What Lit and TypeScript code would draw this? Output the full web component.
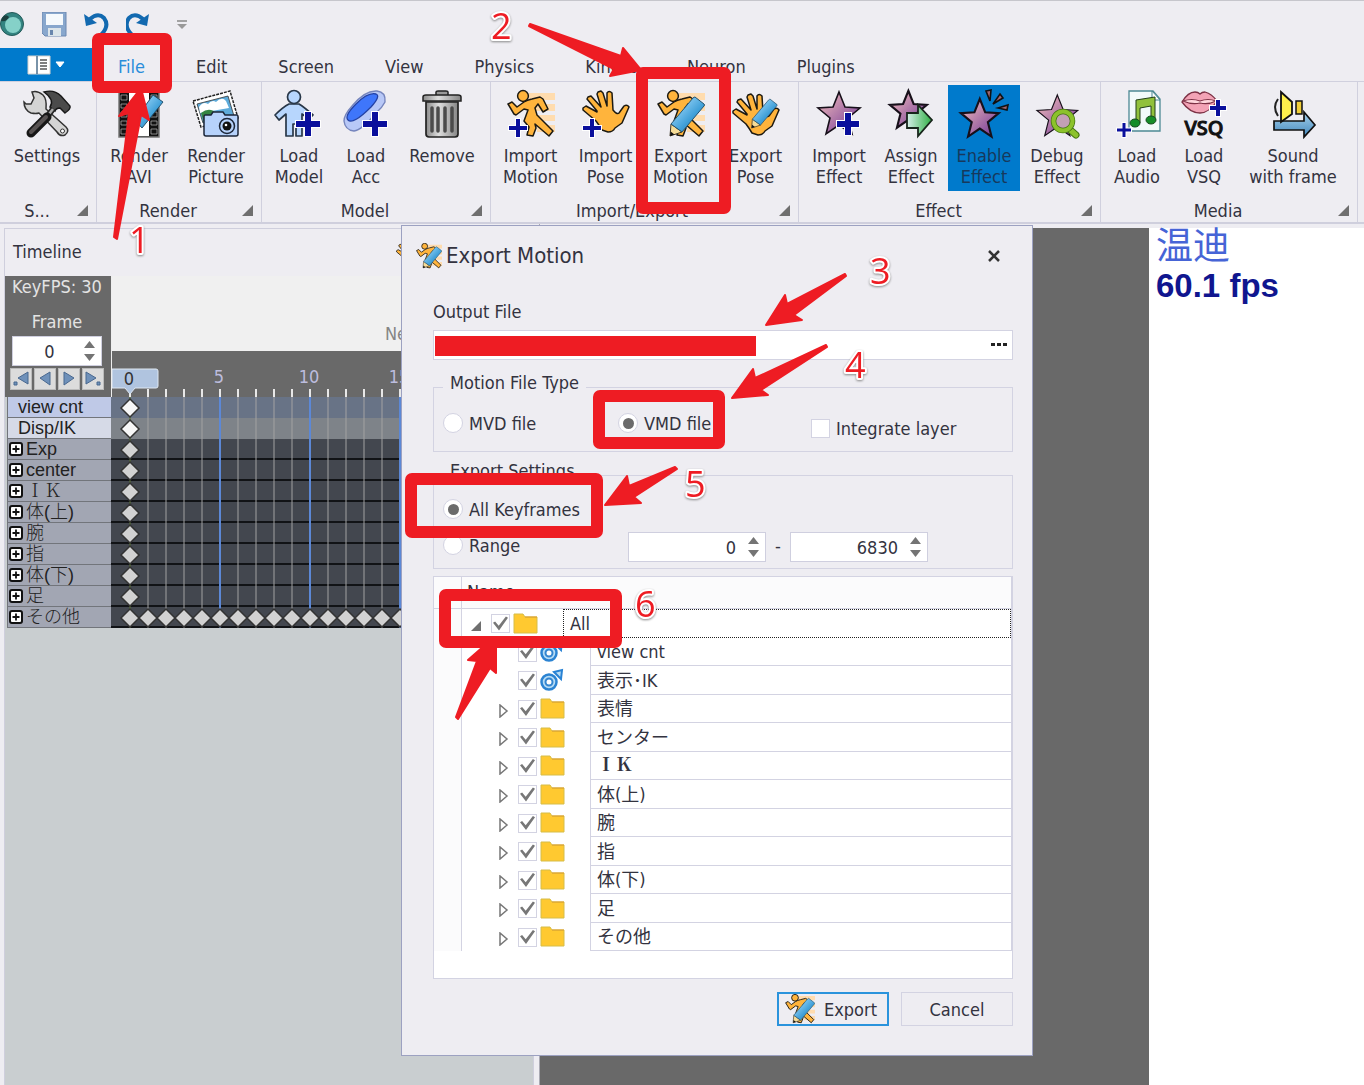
import { LitElement, html, svg, css, nothing } from "lit";
import { customElement, state } from "lit/decorators.js";
import { classMap } from "lit/directives/class-map.js";

const icon = (content: unknown, cls = "icon") =>
  html`<svg class=${cls} viewBox="0 0 48 48" aria-hidden="true">${content}</svg>`;

/* ---- shared icon parts ---- */

const plus = (x: number, y: number, r: number, w: number) => {
  const d = `M${x - r} ${y}H${x + r}M${x} ${y - r}V${y + r}`;
  return svg`<path d=${`M${x - r - 1} ${y}H${x + r + 1}M${x} ${y - r - 1}V${y + r + 1}`} fill="none" stroke="#fff" stroke-width=${w + 2} />
    <path d=${d} fill="none" stroke="#0a0f9c" stroke-width=${w} />`;
};

const runner = svg`
  <path d="M22 3H48V10H22ZM26 14H48V21H26ZM30 25H48V31H30ZM30 35H48V42H30Z" fill="#ffdcae" />
  <path d="M1 14 5 12 10 17 17 12Q20 10 25 9L33 7 36 9 41 19 36 22 31 14 28 18 30 25 46 41 42 46 28 34 29 38 26 46 20 45 22 37 17 31 21 20 17 19 9 25 7 24Z"
    fill="#ffb43c" stroke="#1d1a12" stroke-width="1.500" stroke-linejoin="round" />
  <circle cx="16" cy="6" r="5.400" fill="#ffb43c" stroke="#1d1a12" stroke-width="1.500" />`;

const hand = svg`
  <path d="M1 20 1 18 4 16 15 22 15 21 5 9 6 7 9 6 19 17 15 4 16 2 19 1 21 3 25 16 25 3Q27 0 30 3L31 20Q35 25 37 23L42 16Q45 14 47 17L40 33 33 38Q31 42 26 42L20 40Q17 35 14 31Z"
    fill="#ffb43c" stroke="#1d1a12" stroke-width="1.500" stroke-linejoin="round" />`;

const pencil = svg`
  <path d="M14 34 25 42 13 46Z" fill="#f6dc97" stroke="#3b3423" stroke-width="1" />
  <path d="M13 46 13.6 41.5 17.5 44.6Z" fill="#111" />
  <path d="M14 34 36 8Q37 7 38 7L47 14Q48 15 47 16L25 42Z" fill="url(#pencilBlue)" stroke="#24536f" stroke-width="1" />`;

const star = (stroke = 1.6) => svg`
  <path d="M22 2 28 17 43 18 31 28 35 44 22 35 9 44 13 28 1 18 16 17Z"
    fill="url(#starPink)" stroke="#17101a" stroke-width=${stroke} stroke-linejoin="miter" />`;

/* ---- ribbon icons ---- */

const icons: Record<string, unknown> = {
  settings: svg`
    <path d="M9 2 11 8 8 14 3 14 1 12Q1 20 8 23Q13 24 16 23L34 42Q37 47 42 45Q47 41 43 37L23 19Q24 9 20 5Q14 0 9 2Z" fill="#d4d4d4" stroke="#333" stroke-width="1.5" />
    <circle cx="39.500" cy="41" r="2" fill="#fff" stroke="#333" />
    <path d="M21 2Q31 -1 38 6L47 16Q48 19 42 23L37 18Q33 18 32 21L27 17Q32 10 21 2Z" fill="#4b4b4b" stroke="#181818" stroke-width="1.400" />
    <path d="M30 19 23 28" stroke="#252525" stroke-width="6" /><path d="M30 19 23 28" stroke="#aaa" stroke-width="2.500" />
    <path d="M24 27 8 43" stroke="#171717" stroke-width="9" stroke-linecap="round" />
    <path d="M23 27 8 42" stroke="#575252" stroke-width="4" stroke-linecap="round" />`,
  film: svg`
    <path d="M4 2H44V47H4Z" fill="#111" stroke="#777" stroke-width="1.500" />
    <path d="M14 3H34V46H14Z" fill="#fff" />
    <path d="M6 5H12V10H6ZM6 14H12V18H6ZM6 22H12V27H6ZM6 31H12V35H6ZM6 39H12V44H6ZM36 5H42V10H36ZM36 14H42V18H36ZM36 22H42V27H36ZM36 31H42V35H36ZM36 39H42V44H36Z" fill="#111" stroke="#b8b8b8" stroke-width=".7" />
    <path d="M20 30 38 5 48 12 27 38Z" fill="url(#pencilBlue)" stroke="#24536f" />`,
  picture: svg`
    <path d="M1 11 38 1 46 28 9 37Z" fill="#fff" stroke="#222" stroke-width="1.500" stroke-dasharray="3 1" />
    <path d="M5 14 36 6 42 26 11 33Z" fill="#5eabda" stroke="#333" stroke-width=".8" />
    <path d="M7 17Q11 11 16 14Q20 9 24 12Q30 6 34 11L37 18 8 23Z" fill="#fff" />
    <path d="M9 23Q18 16 25 24L12 33Z" fill="#348442" />
    <path d="M13 25H19L21 22H31L33 25H45Q46 25 46 27V44Q46 46 44 46H14Q12 46 12 44V27Q12 25 13 25Z" fill="#b6d2fb" stroke="#1c2638" stroke-width="1.500" />
    <circle cx="35" cy="36" r="7.500" fill="#b6d2fb" stroke="#1c2638" stroke-width="1.500" /><circle cx="35" cy="36" r="4.500" fill="#111" /><circle cx="34" cy="35" r="1.300" fill="#fff" />`,
  model: svg`
    <path d="M14 14H24Q29 17 38 25L34 29 27 24V46H21V34H18V46H11V24L4 30 0 25Q8 17 14 14Z" fill="#b7d6fd" stroke="#283748" stroke-width="1.700" stroke-linejoin="round" />
    <circle cx="19" cy="7" r="6.500" fill="#b7d6fd" stroke="#283748" stroke-width="1.700" />
    ${plus(33, 34, 12, 6)}`,
  ring: svg`
    <path d="M35 1Q44 2 43 12Q40 18 34 23Q20 40 12 41Q3 40 2 31Q2 25 10 16Q23 0 35 1Z" fill="#b8c8f7" stroke="#7585bd" stroke-width="1.400" />
    <path d="M34 4Q39 6 29 17Q11 35 6 30Q2 26 14 14Q26 2 34 4Z" fill="#3f76fb" stroke="#2442a4" stroke-width="1.300" />
    ${plus(33, 34, 12, 6)}`,
  trash: svg`
    <path d="M18 5V2Q18 1 20 1H28Q30 1 30 2V5" fill="#999" stroke="#222" stroke-width="1.500" />
    <path d="M8 12H40V44Q40 47 37 47H11Q8 47 8 44Z" fill="url(#metal)" stroke="#222" stroke-width="1.700" />
    <path d="M5 7Q5 5 8 5H40Q43 5 43 7V11H5Z" fill="url(#metal)" stroke="#222" stroke-width="1.500" />
    <path d="M14 18V41M20 18V41M27 18V41M34 18V41" stroke="#4b4b4b" stroke-width="3.500" stroke-linecap="round" />`,
  importMotion: svg`${runner}${plus(11, 38, 9, 4)}`,
  importPose: svg`${hand}${plus(10, 38, 9, 4)}`,
  exportMotion: svg`${runner}${pencil}`,
  exportPose: svg`<g transform="translate(0 3)">${hand}</g><g transform="translate(10 4) scale(.74)">${pencil}</g>`,
  starPlus: svg`<g transform="translate(2 0)">${star()}</g>${plus(33, 34, 11, 6)}`,
  starArrow: svg`<g transform="translate(2 -1) scale(.88)">${star(2.400)}</g>
    <path d="M20 23H31V15L45 30 31 46V38H20Z" fill="url(#arrowGreen)" stroke="#17251b" stroke-width="1.800" />`,
  starShine: svg`<g transform="translate(0 7) scale(.9)">${star(2.400)}</g>
    <path d="M26 1 31 0 30 11ZM40 4 43 8 33 14ZM38 18 48 15 47 20Z" fill="#a0656e" stroke="#111" stroke-width="1.600" />`,
  starSearch: svg`<g transform="translate(3 3) scale(.97)">${star(1.200)}</g>
    <path d="M35 38 43 45" stroke="#42720f" stroke-width="7" stroke-linecap="round" /><path d="M35 38 43 45" stroke="#8cc22b" stroke-width="5" stroke-linecap="round" />
    <circle cx="30" cy="31" r="9.500" fill="#c3a0b5" stroke="#42720f" stroke-width="5.500" /><circle cx="30" cy="31" r="9.500" fill="none" stroke="#8cc22b" stroke-width="4" />`,
  audio: svg`
    <path d="M16 1H40L47 9V41H16Z" fill="#f2fafa" stroke="#4d8994" stroke-width="1.300" /><path d="M39 1V10H47Z" fill="#fff" stroke="#4d8994" />
    <path d="M23 10 42 7V30H38V16L27 18V33H23Z" fill="#91c13c" stroke="#234019" stroke-width="1" />
    <ellipse cx="22" cy="33" rx="5" ry="4" fill="#158d28" stroke="#17491d" /><ellipse cx="38" cy="30" rx="5" ry="4" fill="#158d28" stroke="#17491d" />
    ${plus(11, 40, 7, 3)}`,
  vsq: svg`
    <path d="M2 12Q8 2 15 2Q18 2 20 4Q22 2 25 2Q32 4 37 11Q29 23 20 23Q10 23 2 12Z" fill="#f3a3b6" stroke="#7c3145" stroke-width="1.300" />
    <path d="M3 11Q12 8 20 11Q28 8 36 11Q28 15 20 13Q12 15 3 11Z" fill="#ffd7dd" stroke="#7c3145" stroke-width="1.200" />
    ${plus(38, 18, 8, 4)}
    <text x="24" y="45" class="vsq">VSQ</text>`,
  sound: svg`
    <path d="M9 9Q3 17 9 26" fill="none" stroke="#222" stroke-width="2" />
    <path d="M5 31H35V22L46 35 35 47V40H5Z" fill="url(#arrowBlue)" stroke="#111" stroke-width="1.700" />
    <path d="M12 2 23 12V24L12 32Z" fill="#fff04c" stroke="#111" stroke-width="1.800" />
    <path d="M27 11H33V24H27Z" fill="#f1cf37" stroke="#111" stroke-width="1.500" />`,
};

interface Tool { icon: string; lines: string[]; active?: boolean }
interface Group { name: string; cls: string; tools: Tool[] }

const groups: Group[] = [
  { name: "S...", cls: "g-settings", tools: [{ icon: "settings", lines: ["Settings"] }] },
  { name: "Render", cls: "g-render", tools: [
    { icon: "film", lines: ["Render", "AVI"] }, { icon: "picture", lines: ["Render", "Picture"] }] },
  { name: "Model", cls: "g-model", tools: [
    { icon: "model", lines: ["Load", "Model"] }, { icon: "ring", lines: ["Load", "Acc"] }, { icon: "trash", lines: ["Remove"] }] },
  { name: "Import/Export", cls: "g-io", tools: [
    { icon: "importMotion", lines: ["Import", "Motion"] }, { icon: "importPose", lines: ["Import", "Pose"] },
    { icon: "exportMotion", lines: ["Export", "Motion"] }, { icon: "exportPose", lines: ["Export", "Pose"] }] },
  { name: "Effect", cls: "g-effect", tools: [
    { icon: "starPlus", lines: ["Import", "Effect"] }, { icon: "starArrow", lines: ["Assign", "Effect"] },
    { icon: "starShine", lines: ["Enable", "Effect"], active: true }, { icon: "starSearch", lines: ["Debug", "Effect"] }] },
  { name: "Media", cls: "g-media", tools: [
    { icon: "audio", lines: ["Load", "Audio"] }, { icon: "vsq", lines: ["Load", "VSQ"] }, { icon: "sound", lines: ["Sound", "with frame"] }] },
];

const tabs = ["File", "Edit", "Screen", "View", "Physics", "Kinect", "Neuron", "Plugins"];

const tracks = [
  { label: "view cnt", cls: "selected" }, { label: "Disp/IK", cls: "light" },
  { label: "Exp", cls: "latin" }, { label: "center", cls: "latin" },
  { label: "ＩＫ", cls: "serif" }, { label: "体(上)", cls: "" }, { label: "腕", cls: "" }, { label: "指", cls: "" },
  { label: "体(下)", cls: "" }, { label: "足", cls: "" }, { label: "その他", cls: "" },
];

const names = ["view cnt", "表示･IK", "表情", "センター", "ＩＫ", "体(上)", "腕", "指", "体(下)", "足", "その他"];

const range = (n: number) => Array.from({ length: n }, (_, i) => i);
const FRAME = 18;
const ROW = 21;

@customElement("app-root")
export class AppRoot extends LitElement {
  @state() private fileType = "vmd";
  @state() private scope = "all";

  static styles = css`
    :host { display: block; color: #33333f; font: 18px/21px "DejaVu Sans Condensed", "Noto Sans", "Noto Sans CJK JP", sans-serif; }
    * { box-sizing: border-box; }
    button, input { font: inherit; color: inherit; margin: 0; padding: 0; }
    button { background: none; border: 0; }
    svg { display: block; }
    .app { position: relative; display: flex; flex-direction: column; min-height: 100vh; overflow: hidden; background: #eeedf2; }

    .quick { display: flex; align-items: center; gap: 17px; height: 48px; border-top: 1px solid #c6c6cc; }
    .quick svg { width: 25px; height: 25px; }
    .quick .more { width: 12px; height: 10px; margin-left: 8px; }

    .tabs { display: flex; height: 34px; border-bottom: 1px solid #d0d0de; }
    .menu { display: flex; align-items: center; justify-content: center; gap: 4px; width: 92px; background: #007acc; }
    .tablist { display: flex; align-items: center; gap: 51px; padding: 4px 0 0 26px; }
    .tablist a { color: inherit; text-decoration: none; }
    .tablist a.current { color: #2a8dda; }

    .ribbon { display: flex; height: 142px; border-bottom: 2px solid #cfcfdd; }
    .group { display: flex; flex-direction: column; justify-content: space-between; flex: none; padding: 3px 5px 0; border-right: 1px solid #d0d0de; }
    .tools { display: grid; }
    .g-settings { width: 97px; } .g-settings .tools { grid-template-columns: 84px; }
    .g-render { width: 165px; } .g-render .tools { grid-template-columns: 74px 80px; }
    .g-model { width: 229px; } .g-model .tools { grid-template-columns: 64px 70px 82px; }
    .g-io { width: 308px; padding-left: 2px; } .g-io .tools { grid-template-columns: repeat(4, 75px); }
    .g-effect { width: 302px; } .g-effect .tools { grid-template-columns: 70px 74px 72px 74px; }
    .g-media { width: 257px; } .g-media .tools { grid-template-columns: 62px 72px 106px; }
    .tool { display: flex; flex-direction: column; align-items: center; gap: 7px; height: 106px; padding-top: 5px; white-space: nowrap; }
    .tool span { display: block; }
    .tool.on { background: #007acc; color: #17395c; }
    .icon { width: 48px; height: 48px; overflow: visible; flex: none; }
    .vsq { font: 500 20px "Noto Sans", sans-serif; text-anchor: middle; fill: #111; stroke: #111; stroke-width: 1px; }
    .caption { display: flex; align-items: center; height: 24px; }
    .caption span { flex: 1; text-align: center; }
    .caption svg { width: 11px; height: 11px; margin: 0 3px 0 8px; }

    .work { display: flex; flex: 1; }
    .dock { display: flex; flex-direction: column; flex: 0 0 540px; padding: 4px 5px 0 4px; border-right: 1px solid #a9a9b3; }
    .frame { display: flex; flex-direction: column; flex: 1; border: 1px solid #cfcfdd; border-bottom: 0; background: #c9ced0; }
    .dockhead { display: flex; align-items: center; justify-content: space-between; height: 47px; padding: 0 111px 3px 8px; background: #eeedf2; }
    .dockhead svg { width: 26px; height: 26px; margin-top: 5px; }
    .timeline { display: grid; grid-template-columns: 106px minmax(0, 1fr); }
    .control { display: flex; flex-direction: column; align-items: center; height: 121px; padding-right: 2px; background: #696969; color: #e4e4e4; }
    .control .fps { margin-bottom: 14px; }
    .spin { display: flex; align-items: center; background: #fff; border: 1px solid #cfcfdf; color: #33333f; }
    .spin input { flex: 1; min-width: 0; border: 0; outline: 0; background: none; text-align: right; appearance: textfield; }
    .spin input::-webkit-inner-spin-button { display: none; }
    .arrows { display: flex; flex-direction: column; gap: 2px; margin: 0 5px 0 11px; }
    .arrows button, .arrows svg { width: 13px; height: 10px; }
    .control .spin { width: 90px; height: 30px; margin: 4px 0 2px; }
    .control .spin input { text-align: center; padding-left: 14px; }
    .steps { display: flex; gap: 2px; }
    .steps button { width: 22px; height: 22px; background: #dcdcdc; border: 1px solid #bbb; }
    .steps svg { width: 20px; height: 20px; }
    .scale { display: flex; flex-direction: column; border-left: 1px solid #eee; }
    .notice { height: 75px; padding: 47px 0 0 273px; background: #f0f0f0; color: #858585; white-space: nowrap; overflow: hidden; }
    .ruler { width: 100%; height: 46px; background: #696969; }
    .ruler text { fill: #bdbdde; text-anchor: middle; }
    .ruler .now { fill: #333; }
    .labels { padding-left: 2px; font-family: "Liberation Sans", "Noto Sans CJK JP", sans-serif; color: #222; }
    .track { display: flex; align-items: center; gap: 3px; height: 21px; padding-left: 1px; background: #a2a6b3; border: 1px solid #72757b; border-width: 0 0 1px 1px; white-space: nowrap; font-weight: 300; }
    .track.selected { background: #bfc9e7; padding-left: 10px; font-weight: 400; }
    .track.light { background: #d6dae7; padding-left: 10px; font-weight: 400; }
    .track.latin { font-weight: 400; }
    .track.serif { font-family: "Liberation Serif", "Noto Serif CJK JP", "Noto Sans CJK JP", serif; }
    .track svg { width: 14px; height: 14px; }
    .keys { width: 100%; height: 231px; }

    .view { flex: 1; margin-top: 4px; background: #696969; }
    .stats { width: 215px; margin-top: 4px; padding-left: 7px; background: #fff; font-family: "Liberation Sans", "Noto Sans CJK SC", sans-serif; }
    .model { font-size: 37px; line-height: 38px; color: #4664d6; }
    .rate { font-size: 33px; line-height: 40px; font-weight: bold; color: #10168f; }

    .dialog { position: absolute; top: 225px; left: 401px; display: flex; flex-direction: column; width: 632px; height: 831px; padding: 0 19px 29px 31px; background: #eeedf2; border: 1px solid #9ca1c1; }
    .title { display: flex; align-items: center; gap: 4px; height: 60px; margin-left: -17px; }
    .title svg { width: 26px; height: 26px; }
    .title h1 { flex: 1; margin: 0; font-size: 22px; line-height: 28px; font-weight: 400; }
    .title button { width: 24px; height: 24px; margin-right: 7px; }
    .title button svg { width: 12px; height: 12px; margin: 0 auto; }
    .out { display: block; margin: 15px 0 8px; }
    .path { display: flex; height: 30px; background: #fff; border: 1px solid #d3d3e2; }
    .path input { flex: 1; min-width: 0; border: 0; outline: 0; background: none; }
    .path button { width: 26px; }
    .path svg { width: 16px; height: 4px; margin: 0 auto; }
    fieldset { min-width: 0; margin: 0; padding: 0 0 0 9px; border: 1px solid #d3d3e2; }
    legend { height: 31px; padding: 0 7px; }
    .type { height: 80px; margin-top: 12px; }
    .choices { display: grid; grid-template-columns: 175px 193px 1fr; align-items: start; padding-top: 6px; }
    .export { height: 109px; margin-top: 8px; }
    .opt { display: flex; align-items: center; gap: 6px; height: 28px; white-space: nowrap; }
    .export .opt { height: 36px; }
    .opt.box { height: 38px; }
    .rangeRow { display: flex; align-items: center; }
    .rangeRow .opt { width: 185px; }
    .rangeRow .spin { width: 138px; height: 30px; margin-top: 4px; }
    .dash { width: 24px; text-align: center; }
    input[type="radio"] { appearance: none; display: grid; place-items: center; flex: none; width: 20px; height: 20px; background: #fff; border: 1px solid #d3d3e2; border-radius: 50%; }
    input[type="radio"]:checked::after { content: ""; width: 11px; height: 11px; background: #6b6b6b; border-radius: 50%; }
    input[type="checkbox"] { appearance: none; display: grid; place-items: center; flex: none; width: 19px; height: 19px; background: #fff; border: 1px solid #d3d3e2; }
    input[type="checkbox"]:checked::after { content: ""; width: 15px; height: 15px; background: #777; clip-path: polygon(0 45%, 14% 37%, 38% 65%, 86% 4%, 100% 12%, 40% 96%); }

    .list { flex: 1; margin: 7px 0 13px; background: #fff; border: 1px solid #d3d3e2; }
    table { width: 100%; border-spacing: 0; table-layout: fixed; }
    th, td { padding: 0; font-weight: 400; text-align: left; border-right: 1px solid #d3d3e2; }
    .mark { width: 28px; background: #fbfbfc; }
    thead th { height: 32px; background: #fbfbfc; border-bottom: 1px solid #d3d3e2; }
    thead .name { padding: 0 0 3px 5px; }
    tbody tr { height: 28px; }
    tbody tr:nth-child(odd) { height: 29px; }
    .item { display: flex; align-items: center; height: 28px; padding-left: 36px; }
    tr:nth-child(odd) .item { height: 29px; }
    .item .twist { width: 11px; height: 20px; margin-right: 9px; }
    .item .twist svg { width: 11px; height: 14px; margin-top: 3px; }
    .item .kind { width: 26px; height: 24px; margin: 0 24px 2px 3px; flex: none; }
    .item .value { display: flex; align-items: center; align-self: stretch; flex: 1; padding-left: 6px; border: 1px solid #d3d3e2; border-width: 0 0 1px 1px; }
    .item.root { padding-left: 9px; }
    .item.root .value { padding-left: 6px; border: 1px dotted #222; }
    .wide { font-family: "Liberation Serif", "Noto Serif CJK JP", "Noto Sans CJK JP", serif; font-weight: 700; }

    .actions { display: flex; justify-content: flex-end; gap: 12px; }
    .actions button { display: flex; align-items: center; justify-content: center; gap: 9px; width: 112px; height: 34px; border: 1px solid #d3d3e2; }
    .actions .primary { padding-right: 4px; border: 2px solid #2a93dc; }
    .actions svg { width: 30px; height: 30px; }

    .notes { position: absolute; inset: 0; width: 100%; height: 100%; pointer-events: none; }
    .boxes rect { fill: none; stroke: #ee1c23; stroke-width: 12px; }
    .pointers path { fill: #ee1c23; stroke: #ee1c23; stroke-width: 2px; stroke-linejoin: round; }
    .digits text { font: 400 36px "Open Sans", "Noto Sans", sans-serif; fill: #ee1c23; stroke: #fff; stroke-width: 4px; stroke-linejoin: round; paint-order: stroke; filter: drop-shadow(0 1px 1px #888); }
  `;

  private arrows() {
    return html`<span class="arrows">
      <button aria-label="Increase"><svg viewBox="0 0 13 10"><path d="M1 8 6.500 1 12 8Z" fill="#747474" /></svg></button>
      <button aria-label="Decrease"><svg viewBox="0 0 13 10"><path d="M1 2 6.500 9 12 2Z" fill="#747474" /></svg></button>
    </span>`;
  }

  private header() {
    return html`
      <div class="quick">
        <svg viewBox="0 0 25 25"><circle cx="12" cy="12" r="11.500" fill="#338481" stroke="#245a59" /><circle cx="13" cy="13" r="8" fill="#85d1c8" /><path d="M2 6Q6 1 9 5Q7 10 1 9Z" fill="#1c403f" /></svg>
        <button aria-label="Save"><svg viewBox="0 0 25 25"><path d="M0 0H24V24H3L0 21Z" fill="#88a7cd" stroke="#6c88b0" /><path d="M4 2H21V13H4Z" fill="#f5f9fc" /><path d="M6 16H19V24H6Z" fill="#dce5ea" /><path d="M8 18H11V23H8Z" fill="#6986ad" /></svg></button>
        <button aria-label="Undo"><svg viewBox="0 0 25 25"><path d="M6 7Q14 0 20 6Q26 14 17 23" fill="none" stroke="#1269b0" stroke-width="4" /><path d="M0 2 2 14 13 11Z" fill="#1269b0" /></svg></button>
        <button aria-label="Redo"><svg viewBox="0 0 25 25"><path d="M17 7Q9 0 3 6Q-3 14 6 23" fill="none" stroke="#1269b0" stroke-width="4" /><path d="M23 2 21 14 10 11Z" fill="#1269b0" /></svg></button>
        <button aria-label="Customize"><svg class="more" viewBox="0 0 12 10"><path d="M1 1H11" stroke="#888" stroke-width="1.500" /><path d="M1 4H11L6 9Z" fill="#999" /></svg></button>
      </div>
      <nav class="tabs">
        <button class="menu" aria-label="Application menu">
          <svg width="24" height="20" viewBox="0 0 24 20"><path d="M1 1H23V19H1Z" fill="#fff" stroke="#d5d1cd" /><path d="M10 1V19" stroke="#4c6f8d" stroke-width="1.500" /><path d="M13 5H20M13 8H20M13 11H20M13 14H20" stroke="#555" stroke-width="1.300" /></svg>
          <svg width="10" height="8" viewBox="0 0 10 8"><path d="M1 1H9L5 6Z" fill="#fff" stroke="#fff" /></svg>
        </button>
        <div class="tablist">
          ${tabs.map((t, i) => html`<a href="#" class=${classMap({ current: i === 0 })}>${t}</a>`)}
        </div>
      </nav>
      <div class="ribbon">
        ${groups.map((g) => html`
          <section class="group ${g.cls}">
            <div class="tools">
              ${g.tools.map((t) => html`
                <button class=${classMap({ tool: true, on: !!t.active })}>
                  ${icon(icons[t.icon])}
                  <span>${t.lines.map((l) => html`<span>${l}</span>`)}</span>
                </button>`)}
            </div>
            <div class="caption"><span>${g.name}</span><svg viewBox="0 0 11 11"><path d="M11 0V11H0Z" fill="#6f6f6f" /></svg></div>
          </section>`)}
      </div>`;
  }

  private timeline() {
    const last = tracks.length - 1;
    const diamond = (f: number, r: number) => {
      const x = 19 + f * FRAME, y = r * ROW + 11;
      return svg`<path d=${`M${x - 9} ${y}L${x} ${y - 9}L${x + 9} ${y}L${x} ${y + 9}Z`}
        fill=${r < 2 ? "#f7f7f7" : "#d2d2d2"} stroke="#333" stroke-width="1.500" />`;
    };
    const stepPaths = ["M17 3V15L7 9ZM3 13H6V16H3Z", "M15 3V16L5 9Z", "M5 3V16L15 9Z", "M3 3V15L13 9ZM14 13H17V16H14Z"];
    const stepNames = ["First key", "Previous", "Next", "Last key"];
    return html`
      <section class="dock"><div class="frame">
        <div class="dockhead"><span>Timeline</span>${icon(hand, "hand")}</div>
        <div class="timeline">
          <div class="control">
            <span class="fps">KeyFPS: 30</span>
            <label for="frame">Frame</label>
            <div class="spin"><input id="frame" type="number" value="0" />${this.arrows()}</div>
            <div class="steps">
              ${stepPaths.map((d, i) => html`<button aria-label=${stepNames[i]}><svg viewBox="0 0 20 20"><path d=${d} fill="#6f91ba" stroke="#49688f" /></svg></button>`)}
            </div>
          </div>
          <div class="scale">
            <div class="notice">Ne</div>
            <svg class="ruler">
              ${range(24).map((f) => svg`<path d=${`M${18 + f * FRAME} 38V46`} stroke="#e8e8e8" stroke-width="2" />`)}
              ${[5, 10, 15].map((f) => svg`<text x=${17 + f * FRAME} y="32">${f}</text>`)}
              <path d="M0 18H44Q46 18 46 20V35Q46 37 44 37H23L18 43 13 37H0Z" fill="#b0c4df" stroke="#dfe8f2" />
              <text class="now" x="17" y="34">0</text>
            </svg>
          </div>
          <div class="labels">
            ${tracks.map((t, i) => html`<div class="track ${t.cls}">
              ${i > 1 ? html`<svg viewBox="0 0 14 14"><rect x="1" y="1" width="12" height="12" rx="2" fill="#fff" stroke="#111" stroke-width="2" /><path d="M3.500 7H10.500M7 3.500V10.500" stroke="#111" stroke-width="1.800" /></svg>` : nothing}
              <span>${t.label}</span></div>`)}
          </div>
          <svg class="keys">
            <rect width="100%" height="231" fill="#43474f" />
            <rect width="100%" height="21" fill="#687386" /><rect y="21" width="100%" height="21" fill="#7e8389" />
            ${range(9).map((r) => svg`<rect y=${(r + 3) * ROW - 2} width="100%" height="2" fill="#111316" />`)}
            ${range(24).map((f) => svg`<path d=${`M${19 + f * FRAME} 0V231`} stroke=${f === 0 ? "#5c7b2c" : f % 5 ? "#a2a2a2" : "#5c88d6"} stroke-width=${f % 5 || f === 0 ? 1 : 2} />`)}
            ${range(last).map((r) => diamond(0, r))}
            ${range(24).map((f) => diamond(f, last))}
          </svg>
        </div>
      </div></section>`;
  }

  private radio(group: "fileType" | "scope", value: string, label: string) {
    return html`<label class="opt"><input type="radio" name=${group} .checked=${this[group] === value}
      @change=${() => (this[group] = value)} />${label}</label>`;
  }

  private row(name: string, i: number) {
    const root = i < 0, leaf = i === 0 || i === 1;
    const folder = html`<svg class="kind" viewBox="0 0 26 24"><path d="M1 3H10L12 6H24V22H1Z" fill="#ffc930" stroke="#d6bd48" /><path d="M12 6H24" stroke="#db9c2b" /></svg>`;
    const bone = html`<svg class="kind" viewBox="0 0 26 24"><path d="M14 4 22 2 21 11Z" fill="#b7dcf5" stroke="#2882d4" stroke-width="2" /><circle cx="9" cy="14" r="7.500" fill="#b7dcf5" stroke="#2b83d2" stroke-width="2.500" /><circle cx="9" cy="14" r="3.500" fill="#fff" stroke="#3385d0" stroke-width="2" /></svg>`;
    return html`<tr><td class="mark"></td><td>
      <div class=${classMap({ item: true, root })}>
        <button class="twist" aria-label="Expand">${leaf ? nothing : root
          ? html`<svg viewBox="0 0 11 14"><path d="M10 3V13H0Z" fill="#6f6f6f" /></svg>`
          : html`<svg viewBox="0 0 11 14"><path d="M2 1V13L9 7Z" fill="#fff" stroke="#777" stroke-width="1.500" /></svg>`}</button>
        <input type="checkbox" aria-label=${name} checked />
        ${leaf ? bone : folder}
        <span class=${classMap({ value: true, wide: name === "ＩＫ" })}>${name}</span>
      </div></td></tr>`;
  }

  private dialog() {
    return html`
      <section class="dialog" role="dialog" aria-label="Export Motion">
        <div class="title">${icon(icons.exportMotion, "small")}<h1>Export Motion</h1>
          <button aria-label="Close"><svg viewBox="0 0 12 12"><path d="M1 1 11 11M11 1 1 11" stroke="#333" stroke-width="2.500" /></svg></button></div>
        <label class="out" for="out">Output File</label>
        <div class="path"><input id="out" type="text" />
          <button aria-label="Browse"><svg viewBox="0 0 16 4"><path d="M0 0H4V3H0ZM6 0H10V3H6ZM12 0H16V3H12Z" fill="#222" /></svg></button></div>
        <fieldset class="type"><legend>Motion File Type</legend>
          <div class="choices">
            ${this.radio("fileType", "mvd", "MVD file")}${this.radio("fileType", "vmd", "VMD file")}
            <label class="opt box"><input type="checkbox" />Integrate layer</label>
          </div>
        </fieldset>
        <fieldset class="export"><legend>Export Settings</legend>
          ${this.radio("scope", "all", "All Keyframes")}
          <div class="rangeRow">${this.radio("scope", "range", "Range")}
            <div class="spin"><input type="number" aria-label="From" value="0" />${this.arrows()}</div>
            <span class="dash">-</span>
            <div class="spin"><input type="number" aria-label="To" value="6830" />${this.arrows()}</div>
          </div>
        </fieldset>
        <div class="list"><table>
          <thead><tr><th class="mark"></th><th class="name">Name</th></tr></thead>
          <tbody>${this.row("All", -1)}${names.map((n, i) => this.row(n, i))}</tbody>
        </table></div>
        <div class="actions"><button class="primary">${icon(icons.exportMotion, "small")}Export</button><button>Cancel</button></div>
      </section>`;
  }

  private annotations() {
    const digits = [[129, 253, "1"], [491, 39, "2"], [870, 284, "3"], [845, 378, "4"], [685, 497, "5"], [635, 617, "6"]] as const;
    return html`<svg class="notes" aria-hidden="true">
      <defs>
        <linearGradient id="pencilBlue" x1="0" y1="0" x2="1" y2="1"><stop offset=".25" stop-color="#8accf3" /><stop offset=".6" stop-color="#3f9fd8" /><stop offset="1" stop-color="#2e6e9b" /></linearGradient>
        <linearGradient id="starPink" x1="0" y1="0" x2="1" y2="1"><stop offset=".2" stop-color="#dca6b4" /><stop offset=".9" stop-color="#79409a" /></linearGradient>
        <linearGradient id="metal"><stop offset="0" stop-color="#8b8b8b" /><stop offset=".4" stop-color="#dedede" /><stop offset="1" stop-color="#858585" /></linearGradient>
        <linearGradient id="arrowGreen"><stop offset="0" stop-color="#d5efe8" /><stop offset="1" stop-color="#2fae44" /></linearGradient>
        <linearGradient id="arrowBlue" x1="0" y1="0" x2="0" y2="1"><stop offset="0" stop-color="#a7d2ec" /><stop offset="1" stop-color="#4287bd" /></linearGradient>
      </defs>
      <rect x="435" y="336" width="321" height="20" fill="#ee1c23" />
      <g class="pointers">
        <path d="M114 237 117 239 141 115 149 120 141 88 119 116 129 113Z" />
        <path d="M530 24 621 56 623 48 641 70 610 76 614 69 529 26Z" />
        <path d="M845 274 787 304 785 295 766 325 802 320 794 315 846 276Z" />
        <path d="M826 345 755 378 753 369 732 398 768 395 761 390 827 347Z" />
        <path d="M675 467 629 486 627 476 605 505 641 503 634 497 677 469Z" />
        <path d="M456 717 477 661 468 660 484 646 496 646 496 673 490 668 458 719Z" />
      </g>
      <g class="boxes">
        <rect x="98" y="39" width="68" height="48" rx="1" /><rect x="642" y="73" width="83" height="135" rx="1" />
        <rect x="599" y="396" width="120" height="47" rx="1" /><rect x="411" y="479" width="186" height="53" rx="1" />
        <rect x="445" y="595" width="171" height="47" rx="1" />
      </g>
      <g class="digits">${digits.map(([x, y, d]) => svg`<text x=${x} y=${y}>${d}</text>`)}</g>
    </svg>`;
  }

  render() {
    return html`<main class="app">
      ${this.header()}
      <div class="work">
        ${this.timeline()}
        <div class="view"></div>
        <aside class="stats"><div class="model">温迪</div><div class="rate">60.1 fps</div></aside>
      </div>
      ${this.dialog()}
      ${this.annotations()}
    </main>`;
  }
}
